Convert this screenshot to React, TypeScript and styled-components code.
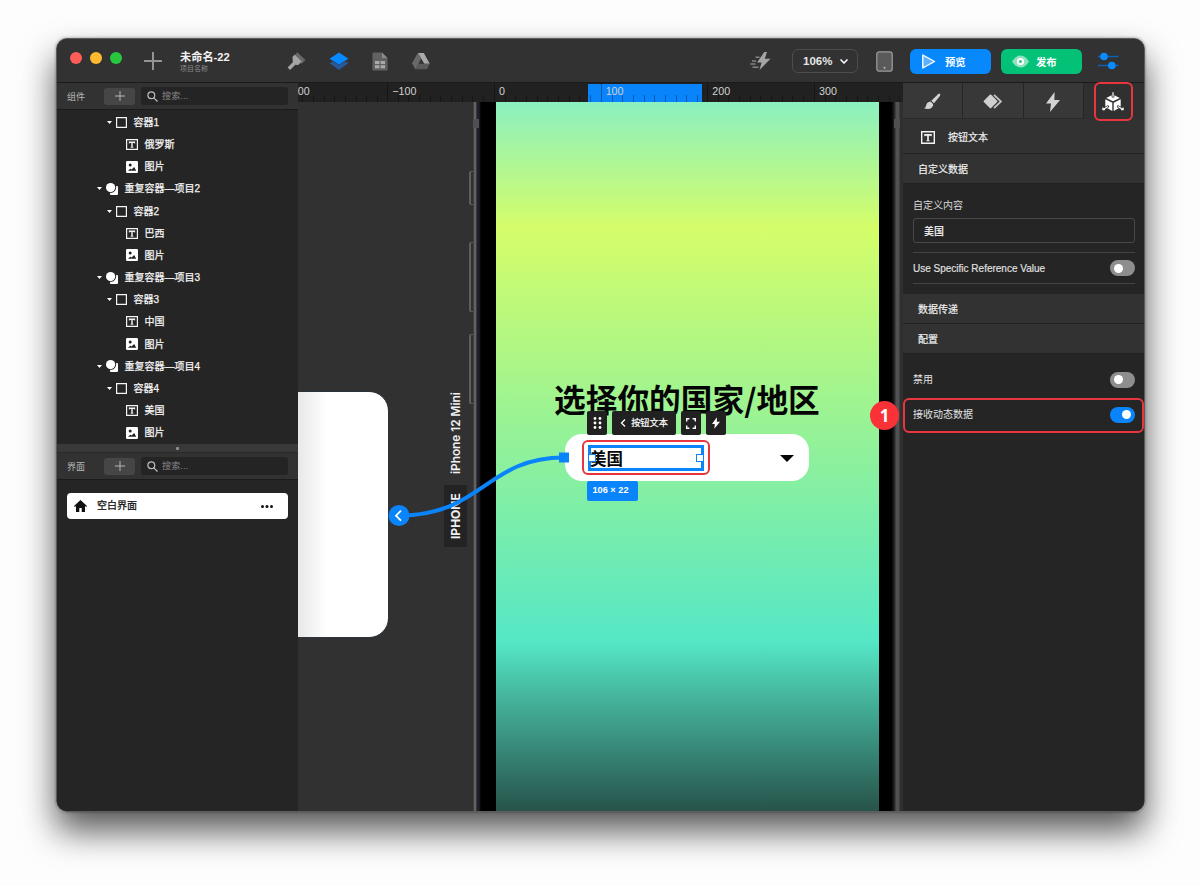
import React from "react";
import styled, { createGlobalStyle } from "styled-components";

const sans = `"Liberation Sans", "Noto Sans CJK SC", sans-serif`;
const blue = "#0a84fb";
const red = "#e8363f";

const Global = createGlobalStyle`
  * { box-sizing: border-box; }
  body { margin: 0; background: #fdfdfd; font-family: ${sans}; color: #e6e6e6; font-size: 10px; line-height: 14px; }
  svg { display: block; flex: none; }
`;

const Desktop = styled.main`
  width: 1200px;
  height: 886px;
  padding: 38px 55px 74px 56px;
  overflow: hidden;
`;

const Window = styled.div`
  position: relative;
  width: 1089px;
  height: 774px;
  border-radius: 11px;
  box-shadow: 0 19px 34px rgba(0, 0, 0, 0.66), 0 0 3px rgba(0, 0, 0, 0.4);
`;

const WindowBody = styled.div`
  display: flex;
  flex-direction: column;
  height: 100%;
  border: 1px solid #5c5c5c;
  border-radius: 11px;
  overflow: hidden;
  background: #252525;
`;

const Header = styled.header`
  display: flex;
  align-items: center;
  height: 44px;
  flex: none;
  background: #323232;
  border-bottom: 1px solid #1b1b1b;
`;

const TrafficLights = styled.div`
  display: flex;
  gap: 8px;
  margin: -6px 0 0 13px;
`;

const Light = styled.i<{ $color: string }>`
  width: 12px;
  height: 12px;
  border-radius: 50%;
  background: ${(p) => p.$color};
`;

const NewTab = styled.div`
  margin: 1px 0 0 22px;
`;

const ProjectTitle = styled.div`
  width: 107px;
  margin: 2px 0 0 18px;
`;

const ProjectName = styled.div`
  font-size: 11.2px;
  line-height: 13px;
  font-weight: 700;
  color: #f2f2f2;
`;

const ProjectCaption = styled.div`
  font-size: 7px;
  line-height: 9px;
  color: #8b8b8b;
`;

const HeaderTools = styled.nav`
  display: flex;
  align-items: center;
  gap: 23px;
  margin-top: 1px;
`;

const HeaderActions = styled.div`
  display: flex;
  align-items: center;
  margin: 1px 25px 0 auto;
`;

const ZoomSelect = styled.div`
  display: flex;
  align-items: center;
  justify-content: space-between;
  width: 66px;
  height: 24px;
  margin: 0 18px 0 21px;
  padding: 0 9px 0 10px;
  border: 1px solid #4d4d4d;
  border-radius: 6px;
  font-size: 11.5px;
  font-weight: 700;
`;

const ActionButton = styled.button<{ $color: string; $gap: number }>`
  display: flex;
  align-items: center;
  gap: ${(p) => p.$gap}px;
  width: 81px;
  height: 25px;
  padding: 0 0 0 11px;
  border: 0;
  border-radius: 6px;
  background: ${(p) => p.$color};
  color: #fff;
  font: 700 10.3px ${sans};
  & + & { margin-left: 10px; }
`;

const Columns = styled.div`
  display: flex;
  flex: 1;
  min-height: 0;
`;

const Sidebar = styled.aside`
  display: flex;
  flex-direction: column;
  width: 241px;
  flex: none;
  background: #252525;
`;

const PanelBar = styled.div<{ $height: number }>`
  display: flex;
  align-items: center;
  height: ${(p) => p.$height}px;
  flex: none;
  padding: 0 10px;
  background: #323232;
  border-bottom: 1px solid #1b1b1b;
`;

const PanelLabel = styled.span`
  width: 37px;
  padding-top: 2px;
  font-size: 9px;
  color: #b8b8b8;
`;

const AddButton = styled.span`
  display: flex;
  align-items: center;
  justify-content: center;
  width: 31px;
  height: 17px;
  border-radius: 3px;
  background: #464646;
`;

const SearchBox = styled.div`
  display: flex;
  align-items: center;
  gap: 4px;
  width: 147px;
  height: 18px;
  margin-left: 6px;
  padding-left: 6px;
  border-radius: 3px;
  background: #242424;
  color: #858585;
  font-size: 9.2px;
`;

const Tree = styled.ul`
  height: 334px;
  margin: 0;
  padding: 1.4px 0 0;
  flex: none;
  list-style: none;
`;

const TreeRow = styled.li<{ $depth: number }>`
  display: flex;
  align-items: center;
  gap: ${(p) => (p.$depth === 0 ? 4 : 4)}px;
  height: 22.16px;
  padding-left: ${(p) => 39.5 + p.$depth * 10}px;
  font-size: 10px;
  -webkit-text-stroke: 0.25px currentColor;
  color: #f4f4f4;
`;

const TreeLabel = styled.span`
  margin-left: 3px;
  padding-top: 1px;
  white-space: nowrap;
`;

const LeafSpacer = styled.i`
  width: 5px;
`;

const Splitter = styled.div`
  display: flex;
  align-items: center;
  justify-content: center;
  height: 9px;
  flex: none;
  background: #393939;
  border-bottom: 1px solid #2a2a2a;
`;

const SplitterGrip = styled.i`
  width: 3px;
  height: 3px;
  border-radius: 1px;
  background: #909090;
`;

const PageItem = styled.div`
  display: flex;
  align-items: center;
  height: 26px;
  margin: 13px 10px 0 10px;
  padding: 0 15px 0 7px;
  border-radius: 4px;
  background: #fff;
  color: #111;
  font-size: 10px;
  -webkit-text-stroke: 0.25px currentColor;
`;

const PageName = styled.span`
  flex: 1;
  margin-left: 10px;
`;

const CanvasColumn = styled.section`
  display: flex;
  flex-direction: column;
  width: 605px;
  flex: none;
`;

const Ruler = styled.div`
  position: relative;
  display: flex;
  height: 19px;
  flex: none;
  overflow: hidden;
  background: #212121;
`;

const RulerRange = styled.div`
  position: absolute;
  left: 290px;
  top: 1px;
  width: 114px;
  height: 18px;
  background: ${blue};
`;

const RulerSegments = styled.div`
  position: relative;
  display: flex;
  margin-left: -17.4px;
`;

const RulerSegment = styled.div`
  width: 106.7px;
  height: 19px;
  flex: none;
  padding: 1px 0 0 4px;
  border-left: 1px solid rgba(0, 0, 0, 0.35);
  background: repeating-linear-gradient(90deg, transparent 0 9.67px, rgba(0, 0, 0, 0.32) 9.67px 10.67px) 0 100% / 100% 7px no-repeat;
  font-size: 10.7px;
  line-height: 15px;
  color: #d2d2d2;
`;

/* Free canvas: everything on it is placed at its own coordinates. */
const Canvas = styled.div`
  position: relative;
  flex: 1;
  overflow: hidden;
  background: #313131;
`;

const BlankArtboard = styled.div`
  position: absolute;
  left: -20px;
  top: 289px;
  width: 111px;
  height: 247px;
  border: 1px solid #2c3440;
  border-radius: 0 20px 20px 0;
  background: linear-gradient(90deg, #e9e9e9 20px, #fff 48px);
`;

const DeviceTag = styled.div<{ $top: number; $height: number; $filled?: boolean }>`
  position: absolute;
  left: 146px;
  top: ${(p) => p.$top}px;
  width: 23px;
  height: ${(p) => p.$height}px;
  display: flex;
  align-items: center;
  justify-content: center;
  writing-mode: vertical-rl;
  transform: rotate(180deg);
  background: ${(p) => (p.$filled ? "#232323" : "transparent")};
  color: #f1f1f1;
  font-family: Inter, sans-serif;
  font-size: ${(p) => (p.$filled ? 12 : 11.8)}px;
  font-weight: ${(p) => (p.$filled ? 700 : 600)};
  white-space: nowrap;
`;

const SideKey = styled.i<{ $top: number; $height: number }>`
  position: absolute;
  left: 171px;
  top: ${(p) => p.$top}px;
  width: 4px;
  height: ${(p) => p.$height}px;
  border: solid #5e5e5e;
  border-width: 1px 0 1px 2px;
  border-radius: 2px 0 0 2px;
`;

const Phone = styled.div`
  position: absolute;
  left: 175px;
  top: 0;
  width: 430px;
  height: 710px;
  padding-left: 23px;
  background: linear-gradient(90deg, #414142 0 1px, #626264 1px 3px, #3a3a3c 3px 4px, #20202a 4px 6px, #000 8px 418px, #101014 420px, #303033 422px, #515153 423px 426px, #2f2f2f 427px);
`;

const PhoneBand = styled.i<{ $left: number }>`
  position: absolute;
  left: ${(p) => p.$left}px;
  top: 17px;
  width: 6px;
  height: 9px;
  background: #505052;
`;

const Screen = styled.div`
  width: 383px;
  height: 710px;
  background: linear-gradient(180deg, #8bf0c0 0, #d5fd69 126px, #55e7c6 540px, #45b69d 594px, #27524a 710px);
`;

const ScreenTitle = styled.h1`
  position: absolute;
  left: 256px;
  top: 273px;
  margin: 0;
  font-family: "Noto Sans CJK SC", sans-serif;
  font-size: 31.7px;
  line-height: 46px;
  font-weight: 700;
  color: #050505;
  white-space: nowrap;
`;

const SelectField = styled.div`
  position: absolute;
  left: 267px;
  top: 332px;
  display: flex;
  align-items: center;
  justify-content: space-between;
  width: 244px;
  height: 47px;
  padding: 2px 15px 0 25px;
  border-radius: 17px;
  background: #fff;
  color: #080808;
  font-size: 16.5px;
  line-height: 22px;
  font-weight: 700;
`;

const Selection = styled.div`
  position: absolute;
  left: 290px;
  top: 343px;
  display: flex;
  align-items: center;
  justify-content: space-between;
  width: 116px;
  height: 26px;
  border: 3px solid ${blue};
`;

const Handle = styled.i`
  width: 8px;
  height: 8px;
  margin: 0 -3px;
  border: 1px solid ${blue};
  background: #fff;
`;

const SizeBadge = styled.div`
  position: absolute;
  left: 289px;
  top: 379px;
  width: 51px;
  height: 20px;
  border-radius: 2px;
  background: ${blue};
  color: #fff;
  font-size: 9.2px;
  line-height: 19px;
  font-weight: 700;
  text-align: center;
  padding-right: 4px;
`;

const FloatingTools = styled.div`
  position: absolute;
  left: 289px;
  top: 309px;
  display: flex;
  gap: 5px;
`;

const ToolChip = styled.div<{ $width?: number }>`
  display: flex;
  align-items: center;
  justify-content: center;
  gap: 5px;
  width: ${(p) => p.$width ?? 20}px;
  height: 24px;
  border-radius: 2px;
  background: #212121;
  color: #fff;
  font-size: 9.2px;
  -webkit-text-stroke: 0.2px currentColor;
`;

const Connector = styled.svg`
  position: absolute;
  left: 0;
  top: 0;
`;

const Inspector = styled.aside`
  display: flex;
  flex-direction: column;
  width: 241px;
  flex: none;
  background: #252525;
`;

const Tabs = styled.div`
  display: flex;
  height: 36px;
  flex: none;
`;

const Tab = styled.div<{ $active?: boolean }>`
  display: flex;
  align-items: center;
  justify-content: center;
  width: 60.5px;
  padding-top: 2px;
  background: ${(p) => (p.$active ? "#303030" : "#383838")};
  border-right: 1px solid ${(p) => (p.$active ? "#303030" : "#262626")};
  border-bottom: 1px solid ${(p) => (p.$active ? "#303030" : "#2a2a2a")};
`;

const SectionHead = styled.div<{ $height: number; $indent?: number }>`
  display: flex;
  align-items: center;
  gap: 13px;
  height: ${(p) => p.$height}px;
  flex: none;
  padding: 3px 0 0 ${(p) => p.$indent ?? 15}px;
  background: #323232;
  border-bottom: 1px solid #222;
  font-size: 10px;
  -webkit-text-stroke: 0.2px currentColor;
  color: #f0f0f0;
`;

const Fields = styled.div<{ $height: number; $top: number }>`
  height: ${(p) => p.$height}px;
  padding: ${(p) => p.$top}px 9px 0 10px;
  flex: none;
`;

const FieldLabel = styled.div`
  font-size: 10px;
  line-height: 16px;
  color: #d9d9d9;
`;

const TextField = styled.div`
  height: 25px;
  margin: 4px 0 9px;
  padding-left: 10px;
  border: 1px solid #484848;
  border-radius: 3px;
  font-weight: 700;
  line-height: 25px;
  color: #e4e4e4;
`;

const ToggleRow = styled.div<{ $height: number; $ruled?: boolean }>`
  display: flex;
  align-items: center;
  justify-content: space-between;
  height: ${(p) => p.$height}px;
  font-size: 10px;
  color: #e2e2e2;
  border: solid #434343;
  border-width: ${(p) => (p.$ruled ? "1px 0" : "0")};
`;

const ToggleLabel = styled.span`
  padding-top: 1px;
`;

const LatinLabel = styled.span`
  padding-top: 1px;
  font-size: 10px;
  -webkit-text-stroke: 0.15px currentColor;
  white-space: nowrap;
`;

const Toggle = styled.i<{ $on?: boolean }>`
  display: flex;
  align-items: center;
  justify-content: ${(p) => (p.$on ? "flex-end" : "flex-start")};
  width: 25px;
  height: 16px;
  padding: 0 4px;
  border-radius: 8px;
  background: ${(p) => (p.$on ? blue : "#8e8e8e")};
  &::before {
    content: "";
    width: 9px;
    height: 9px;
    border-radius: 50%;
    background: #fff;
  }
`;

const Callout = styled.div<{ $x: number; $y: number; $w: number; $h: number }>`
  position: absolute;
  left: ${(p) => p.$x}px;
  top: ${(p) => p.$y}px;
  width: ${(p) => p.$w}px;
  height: ${(p) => p.$h}px;
  border: 2px solid ${red};
  border-radius: 6px;
`;

const StepBadge = styled.div`
  position: absolute;
  left: 814px;
  top: 363px;
  width: 29px;
  height: 29px;
  border-radius: 50%;
  background: #fb3138;
  color: #fff;
  font: 700 17px/29px "Open Sans", "Noto Sans", sans-serif;
  text-align: center;
`;

const Plus = ({ size, color, width = 1 }: { size: number; color: string; width?: number }) => (
  <svg width={size} height={size} viewBox={`0 0 ${size} ${size}`} stroke={color} strokeWidth={width}>
    <path d={`M${size / 2} 0V${size}M0 ${size / 2}H${size}`} />
  </svg>
);

const SearchIcon = () => (
  <svg width="11" height="11" viewBox="0 0 11 11" fill="none" stroke="#bdbdbd" strokeWidth="1.2">
    <circle cx="4.3" cy="4.3" r="3.4" />
    <path d="M6.8 6.8l3.7 3.7" />
  </svg>
);

const Caret = () => (
  <svg width="5" height="3" viewBox="0 0 5 3" fill="#fff"><path d="M0 0h5L2.5 3z" /></svg>
);

const BoxIcon = () => (
  <svg width="11" height="11" viewBox="0 0 11 11" fill="none" stroke="#f4f4f4" strokeWidth="1.2"><path d="M.6.6h9.8v9.8H.6z" /></svg>
);

const TextIcon = ({ width = 12, height = 11 }: { width?: number; height?: number }) => (
  <svg width={width} height={height} viewBox="0 0 12 11" fill="none" stroke="#f4f4f4">
    <path strokeWidth="1.2" d="M.6.6h10.8v9.8H.6z" />
    <path strokeWidth="1.4" d="M3.2 3.2h5.6M6 3.2v5" />
    <path strokeWidth=".9" d="M3.3 2.6v1.9M8.7 2.6v1.9M4.7 8.2h2.6" />
  </svg>
);

const ImageIcon = () => (
  <svg width="12" height="12" viewBox="0 0 12 12">
    <rect width="12" height="12" rx="1.3" fill="#fff" />
    <circle cx="4.2" cy="4" r="1.5" fill="#222" />
    <path d="M2 9.8l2.2-2.1 1.4.8L8.2 6l2 3.8z" fill="#222" />
  </svg>
);

const RepeatIcon = () => (
  <svg width="12" height="12" viewBox="0 0 12 12" fill="#fff">
    <circle cx="4.6" cy="4.600" r="4.600" />
    <path d="M10 3H11q1 0 1 1V11q0 1-1 1H5q-1 0-1-1v-1a5.600 5.600 0 0 0 6-7z" />
  </svg>
);

const Bolt = ({ width, height, color }: { width: number; height: number; color: string }) => (
  <svg width={width} height={height} viewBox="0 0 14 20" fill={color}><path d="M8.6 0L0 11.6h5L4 20l10-12H8.4z" /></svg>
);

type Kind = "box" | "text" | "image" | "repeat";
const glyphs: Record<Kind, React.ReactNode> = {
  box: <BoxIcon />,
  text: <TextIcon />,
  image: <ImageIcon />,
  repeat: <RepeatIcon />,
};
const depths: Record<Kind, number> = { repeat: 0, box: 1, text: 2, image: 2 };

const rows: [Kind, string][] = [
  ["box", "容器1"], ["text", "俄罗斯"], ["image", "图片"],
  ["repeat", "重复容器—项目2"], ["box", "容器2"], ["text", "巴西"], ["image", "图片"],
  ["repeat", "重复容器—项目3"], ["box", "容器3"], ["text", "中国"], ["image", "图片"],
  ["repeat", "重复容器—项目4"], ["box", "容器4"], ["text", "美国"], ["image", "图片"],
];

const SearchBar = ({ label, height }: { label: string; height: number }) => (
  <PanelBar $height={height}>
    <PanelLabel>{label}</PanelLabel>
    <AddButton><Plus size={10} color="#b5b5b5" /></AddButton>
    <SearchBox><SearchIcon />搜索...</SearchBox>
  </PanelBar>
);

const Spacer = styled.i<{ $size: number }>`
  width: ${(p) => p.$size}px;
`;

const HeaderBar = () => (
  <Header>
    <TrafficLights>
      <Light $color="#fe5e57" /><Light $color="#febb2e" /><Light $color="#27c83f" />
    </TrafficLights>
    <NewTab><Plus size={18} color="#949494" width={2} /></NewTab>
    <ProjectTitle>
      <ProjectName>未命名-22</ProjectName>
      <ProjectCaption>项目名称</ProjectCaption>
    </ProjectTitle>
    <HeaderTools>
      <svg width="19" height="19" viewBox="0 0 19 19">
        <path d="M8.300 2.200L10.300.3l8.200 7.800-4.100 4z" fill="#686868" />
        <path d="M5.500 4.800L7.800 2.600l6.800 6.900-3.300 3.500-3-.300-5.200 5.300L.6 15.400l5.200-5.200z" fill="#a5a5a5" />
      </svg>
      <svg width="20" height="19" viewBox="0 0 21 19">
        <path d="M1 11l3-1.600 6.500 3.500 6.500-3.500L20.500 11 10.500 18.500.5 11z" fill="#28599b" />
        <path d="M10.500 0L20.500 6.500l-10 6.200L.5 6.500z" fill="#0789ff" />
      </svg>
      <svg width="16" height="19" viewBox="0 0 16 19">
        <path d="M1.500.5H10l5.500 5.500V18.500h-15V1.500z" fill="#626262" />
        <path d="M10 .5l5.500 5.500H10z" fill="#8b8b8b" />
        <path d="M3 9h4.400v3H3zM8.600 9H13v3H8.600zM3 13.200h4.400v3H3zM8.600 13.200H13v3H8.600z" fill="#a9a9a9" />
      </svg>
      <svg width="20" height="19" viewBox="0 0 20 19">
        <path d="M6.800 1L1 11.300 4.500 17.500 10 6.800z" fill="#696969" />
        <path d="M7 1h5.800l6 10.800h-5.500z" fill="#aaa" />
        <path d="M7.200 11.700h11.600l-2.800 5.500H4.500z" fill="#5a5a5a" />
      </svg>
    </HeaderTools>
    <HeaderActions>
      <svg width="21" height="18" viewBox="0 0 21 18">
        <path d="M14.300 0L7 10.500h4.500L9.500 18 20.500 6.800h-5.700L17 0z" fill="#a4a4a4" />
        <path d="M5.500 5.300h4M2 9h4M.5 12h5M2.500 15.200h6" stroke="#858585" strokeWidth="1.500" />
      </svg>
      <ZoomSelect>
        106%
        <svg width="8" height="5" viewBox="0 0 8 5" fill="none" stroke="#fff" strokeWidth="1.500"><path d="M.5.5L4 4 7.500.5" /></svg>
      </ZoomSelect>
      <svg width="17" height="21" viewBox="0 0 17 21">
        <rect x=".8" y=".8" width="15.400" height="19.400" rx="2.500" fill="#5a5a5a" stroke="#999" strokeWidth="1.300" />
        <circle cx="8.500" cy="16.800" r="1" fill="#bbb" />
      </svg>
      <Spacer $size={17} />
      <ActionButton $color="#0788fd" $gap={9}>
        <svg width="15" height="15" viewBox="0 0 15 15"><path d="M1.800 1L13.500 7.500 1.800 14z" fill="#5fb1fe" stroke="#fff" strokeWidth="1.400" strokeLinejoin="round" /></svg>
        预览
      </ActionButton>
      <ActionButton $color="#04c178" $gap={7}>
        <svg width="17" height="13" viewBox="0 0 17 13">
          <path d="M0 6.500Q3.500.5 8.500.5T17 6.500Q13.500 12.500 8.500 12.500T0 6.500z" fill="#8fe2c0" />
          <circle cx="8.500" cy="6.500" r="3.600" fill="#fff" /><circle cx="8.500" cy="6.500" r="1.600" fill="#2fc98b" />
        </svg>
        发布
      </ActionButton>
      <Spacer $size={16} />
      <svg width="21" height="18" viewBox="0 0 21 18">
        <path d="M0 4.500h20.500M0 13.500h20.500" stroke="#0c62b8" strokeWidth="1.500" />
        <circle cx="6" cy="4.500" r="3.800" fill="#0a8cff" /><circle cx="13.800" cy="13.500" r="3.800" fill="#0a8cff" />
      </svg>
    </HeaderActions>
  </Header>
);

const LeftPanel = () => (
  <Sidebar>
    <SearchBar label="组件" height={27} />
    <Tree>
      {rows.map(([kind, name], i) => (
        <TreeRow key={i} $depth={depths[kind]}>
          {depths[kind] < 2 ? <Caret /> : <LeafSpacer />}
          {glyphs[kind]}
          <TreeLabel>{name}</TreeLabel>
        </TreeRow>
      ))}
    </Tree>
    <Splitter><SplitterGrip /></Splitter>
    <SearchBar label="界面" height={27} />
    <PageItem>
      <svg width="13" height="12" viewBox="0 0 13 12" fill="#111"><path d="M6.500 0L0 6l.8 1L2 6v6h3.300V8h2.400v4H11V6l1.200 1 .8-1z" /></svg>
      <PageName>空白界面</PageName>
      <svg width="12" height="3" viewBox="0 0 12 3" fill="#111"><circle cx="1.500" cy="1.500" r="1.500" /><circle cx="6" cy="1.500" r="1.500" /><circle cx="10.500" cy="1.500" r="1.500" /></svg>
    </PageItem>
  </Sidebar>
);

const CanvasArea = () => (
  <CanvasColumn>
    <Ruler>
      <RulerRange />
      <RulerSegments>
        {["−200", "−100", "0", "100", "200", "300"].map((n) => <RulerSegment key={n}>{n}</RulerSegment>)}
      </RulerSegments>
    </Ruler>
    <Canvas>
      <BlankArtboard />
      <DeviceTag $top={287} $height={88}>iPhone 12 Mini</DeviceTag>
      <DeviceTag $top={383} $height={62} $filled>IPHONE</DeviceTag>
      <SideKey $top={69} $height={34} />
      <SideKey $top={140} $height={70} />
      <SideKey $top={232} $height={70} />
      <Phone>
        <PhoneBand $left={0} />
        <PhoneBand $left={421} />
        <Screen />
      </Phone>
      <ScreenTitle>选择你的国家/地区</ScreenTitle>
      <SelectField>
        美国
        <svg width="14" height="7" viewBox="0 0 14 7"><path d="M0 0h14L7 7z" fill="#050505" /></svg>
      </SelectField>
      <Selection><Handle /><Handle /></Selection>
      <SizeBadge>106 × 22</SizeBadge>
      <FloatingTools>
        <ToolChip>
          <svg width="9" height="12" viewBox="0 0 9 12" fill="#fff">
            {[1.5, 6, 10.5].map((y) => <React.Fragment key={y}><circle cx="2" cy={y} r="1.400" /><circle cx="7" cy={y} r="1.400" /></React.Fragment>)}
          </svg>
        </ToolChip>
        <ToolChip $width={64}>
          <svg width="6" height="8" viewBox="0 0 6 8" fill="none" stroke="#fff" strokeWidth="1.300"><path d="M5 .5L1.500 4 5 7.500" /></svg>
          按钮文本
        </ToolChip>
        <ToolChip>
          <svg width="10" height="11" viewBox="0 0 10 11" fill="none" stroke="#fff" strokeWidth="1.400"><path d="M.7 3.600V.7h2.700M6.600.7h2.700v2.900M9.300 7.400v2.900H6.600M3.400 10.300H.7V7.400" /></svg>
        </ToolChip>
        <ToolChip><Bolt width={8} height={12} color="#fff" /></ToolChip>
      </FloatingTools>
      <Connector width="604" height="709" viewBox="0 0 604 709">
        <path d="M101 413.500C185 413.500 188 355.500 266 355.500" fill="none" stroke={blue} strokeWidth="4" />
        <path d="M261 350.500h10v10h-10z" fill={blue} />
        <circle cx="101" cy="413.500" r="10.500" fill={blue} />
        <path d="M103 408.700l-5 5 5 5" fill="none" stroke="#fff" strokeWidth="1.800" />
      </Connector>
    </Canvas>
  </CanvasColumn>
);

const RightPanel = () => (
  <Inspector>
    <Tabs>
      <Tab>
        <svg width="17" height="17" viewBox="0 0 17 17" fill="#d3d3d3">
          <path d="M15.700.7q1.300.8.200 2.200L10 10.200 7.300 7.700 14 1.200q.8-.8 1.700-.5z" />
          <path d="M6.500 8.600l2.600 2.500q.5 2.600-1.700 4Q4.600 17 0 15.300q1.800-.6 2.100-2.700Q2.600 9 6.500 8.600z" />
        </svg>
      </Tab>
      <Tab>
        <svg width="19" height="15" viewBox="0 0 19 15">
          <rect x="2.300" y="2.200" width="10.400" height="10.400" rx="1" transform="rotate(45 7.500 7.400)" fill="#d0d0d0" />
          <path d="M11 .8l7 6.700-7 6.700" fill="none" stroke="#c4c4c4" strokeWidth="1.800" />
        </svg>
      </Tab>
      <Tab><Bolt width={14} height={20} color="#d3d3d3" /></Tab>
      <Tab $active>
        <svg width="22" height="20" viewBox="0 0 22 20">
          <path d="M9.700 3.300v2.200h2.600V3.300L17.800 6 11 9.300 4.200 6z" fill="#fff" />
          <path d="M3.300 7.200l7 3.500V19l-5-2.700 2-1.200-1.200-2-2.800 1.600z" fill="#fff" />
          <path d="M18.700 7.200l-7 3.500V19l5-2.700-2-1.200 1.200-2 2.800 1.600z" fill="#fff" />
          <path d="M11 .3v4.400M6 14.600L.8 17.700M.9 15.600v2.100h2M16 14.600l5.200 3.100M21.100 15.600v2.100h-2" fill="none" stroke="#fff" strokeWidth="1.200" />
        </svg>
      </Tab>
    </Tabs>
    <SectionHead $height={35} $indent={18}><TextIcon width={14} height={13} />按钮文本</SectionHead>
    <SectionHead $height={30}>自定义数据</SectionHead>
    <Fields $height={110} $top={14}>
      <FieldLabel>自定义内容</FieldLabel>
      <TextField>美国</TextField>
      <ToggleRow $height={32} $ruled><LatinLabel>Use Specific Reference Value</LatinLabel><Toggle /></ToggleRow>
    </Fields>
    <SectionHead $height={30}>数据传递</SectionHead>
    <SectionHead $height={30}>配置</SectionHead>
    <Fields $height={90} $top={8}>
      <ToggleRow $height={35}><ToggleLabel>禁用</ToggleLabel><Toggle /></ToggleRow>
      <ToggleRow $height={35}><ToggleLabel>接收动态数据</ToggleLabel><Toggle $on /></ToggleRow>
    </Fields>
  </Inspector>
);

export default function App() {
  return (
    <>
      <Global />
      <Desktop>
        <Window>
          <WindowBody>
            <HeaderBar />
            <Columns>
              <LeftPanel />
              <CanvasArea />
              <RightPanel />
            </Columns>
          </WindowBody>
          <Callout $x={1038} $y={44} $w={39} $h={39} />
          <Callout $x={847} $y={360} $w={241} $h={35} />
          <Callout $x={526} $y={402} $w={128} $h={35} />
          <StepBadge>1</StepBadge>
        </Window>
      </Desktop>
    </>
  );
}
